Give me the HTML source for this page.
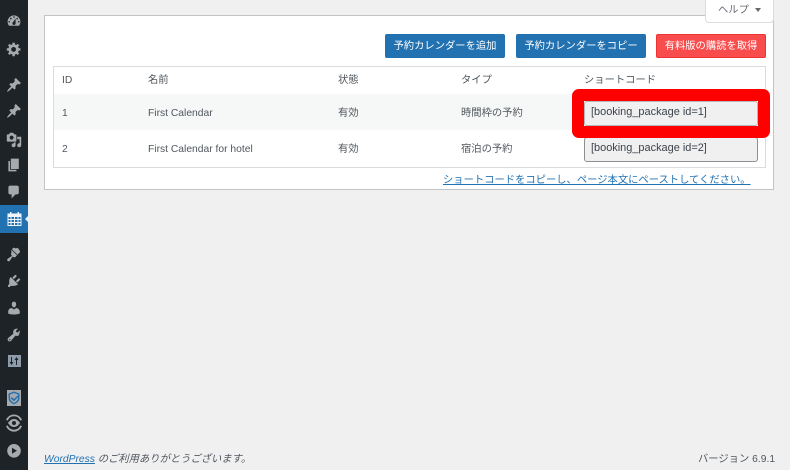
<!DOCTYPE html>
<html lang="ja"><head><meta charset="utf-8"><style>
html,body{margin:0;padding:0;width:790px;height:470px;overflow:hidden;background:#f0f0f1;font-family:"Liberation Sans","Noto Sans CJK JP",sans-serif;color:#50575e;font-size:10.3px}
div,a,span{position:absolute;white-space:nowrap;box-sizing:border-box}
#side{left:0;top:0;width:28px;height:470px;background:#1d2327}
#cur{left:0;top:205px;width:28px;height:28px;background:#2271b1}
#arrow{left:25px;top:215px;width:0;height:0;border:4px solid transparent;border-left:0;border-right:4px solid #f0f0f1}
svg.i{position:absolute;left:6px;width:16px;height:16px;fill:#a7aaad}
#panel{left:44px;top:15px;width:730px;height:175px;background:#fff;border:1px solid #c3c4c7}
#help{left:705px;top:-1px;width:69px;height:24px;background:#fff;border:1px solid #dcdcde;border-top:0;border-radius:0 0 4px 4px;color:#646970;font-size:10.3px;line-height:24px;padding-left:12px}
#help i{position:absolute;left:49px;top:9px;width:0;height:0;border:3px solid transparent;border-top:4px solid #646970;border-bottom:0}
.btn{top:34px;height:24px;border-radius:2px;background:#2271b1;color:#fff;text-align:center;line-height:25px;font-size:10.3px}
#table{left:53px;top:66px;width:713px;height:102px;border:1px solid #dcdcde;background:#fff}
.row{left:54px;width:711px;height:36px;background:#f6f7f7;top:94px}
.t{line-height:14px;color:#50575e;font-size:10.3px}
.inp{left:584px;width:174px;height:25px;background:#f0f0f1;border:1px solid #8c8f94;border-radius:3px;font-size:10.95px;line-height:20px;padding-left:6px;color:#3c434a}
#red{left:572px;top:89px;width:198px;height:49px;border:12px solid #f00;border-radius:7px}
a{color:#2271b1;text-decoration:underline}
</style></head><body>
<div id="side"></div><div id="cur"></div><div id="arrow"></div>
<svg class="i" style="top:13px" viewBox="0 0 20 20"><path fill-rule="evenodd" d="M3.760 16h12.480c1.100-1.370 1.760-3.110 1.760-5 0-4.420-3.580-8-8-8s-8 3.580-8 8c0 1.890.660 3.630 1.760 5zM10 4c.55 0 1 .45 1 1s-.45 1-1 1-1-.45-1-1 .45-1 1-1zM6 6c.55 0 1 .45 1 1s-.45 1-1 1-1-.45-1-1 .45-1 1-1zm8 0c.55 0 1 .45 1 1s-.45 1-1 1-1-.45-1-1 .45-1 1-1zm-5.370 5.550L12 7v6c0 1.100-.9 2-2 2s-2-.9-2-2c0-.57.24-1.080.63-1.450zM4 10c.55 0 1 .45 1 1s-.45 1-1 1-1-.45-1-1 .45-1 1-1zm12 0c.55 0 1 .45 1 1s-.45 1-1 1-1-.45-1-1 .45-1 1-1z"/></svg>
<svg class="i" style="top:41px" viewBox="0 0 20 20"><path fill-rule="evenodd" d="M18 12h-2.180c-.17.7-.44 1.350-.81 1.930l1.540 1.540-2.100 2.100-1.540-1.540c-.58.360-1.230.640-1.910.810V19H8v-2.180c-.68-.170-1.330-.450-1.910-.810l-1.540 1.540-2.120-2.120 1.540-1.540c-.36-.58-.64-1.220-.81-1.890H1V9h2.180c.17-.68.450-1.330.810-1.910L2.450 5.550l2.100-2.100 1.540 1.540c.58-.370 1.230-.640 1.910-.810V2h3v2.180c.68.170 1.330.440 1.910.810l1.540-1.540 2.120 2.120-1.540 1.540c.36.580.64 1.220.81 1.890H18v3zm-8.500 1.500c1.660 0 3-1.340 3-3s-1.340-3-3-3-3 1.340-3 3 1.340 3 3 3z"/></svg>
<svg class="i" style="top:77px" viewBox="0 0 20 20"><path d="M10.440 3.020l1.820-1.820 6.360 6.350-1.830 1.820c-1.050-.68-2.480-.57-3.410.36l-.75.75c-.92.93-1.040 2.350-.35 3.410l-1.830 1.820-2.410-2.410-2.800 2.790c-.42.42-3.380 2.710-3.800 2.290s1.860-3.390 2.280-3.810l2.790-2.790L4.100 9.360l1.830-1.820c1.050.69 2.480.57 3.410-.36l.75-.75c.93-.92 1.040-2.350.35-3.410z"/></svg>
<svg class="i" style="top:103px" viewBox="0 0 20 20"><path d="M10.440 3.020l1.820-1.820 6.360 6.350-1.830 1.820c-1.050-.68-2.480-.57-3.410.36l-.75.75c-.92.93-1.040 2.350-.35 3.410l-1.830 1.820-2.410-2.410-2.800 2.790c-.42.42-3.380 2.710-3.800 2.290s1.860-3.390 2.280-3.810l2.790-2.790L4.100 9.360l1.830-1.820c1.050.69 2.480.57 3.410-.36l.75-.75c.93-.92 1.040-2.350.35-3.410z"/></svg>
<svg class="i" style="top:132px" viewBox="0 0 20 20"><path fill-rule="evenodd" d="M13 11V4c0-.55-.45-1-1-1h-1.670L9 1H5L3.670 3H2c-.55 0-1 .45-1 1v7c0 .55.45 1 1 1h10c.55 0 1-.45 1-1zM7 4.500c1.380 0 2.500 1.120 2.500 2.500S8.380 9.500 7 9.500 4.500 8.380 4.500 7 5.620 4.500 7 4.500zM14 6h5v10.500c0 1.380-1.120 2.500-2.500 2.500S14 17.880 14 16.500s1.120-2.500 2.500-2.500c.17 0 .34.02.5.05V9h-3V6zm-4 8.050V13h2v3.500c0 1.380-1.120 2.500-2.500 2.500S7 17.880 7 16.500 8.120 14 9.500 14c.17 0 .34.02.5.05z"/></svg>
<svg class="i" style="top:157px" viewBox="0 0 20 20"><path d="M6 15V2h10v13H6zm-1 1h8v2H3V5h2v11z"/></svg>
<svg class="i" style="top:184px" viewBox="0 0 20 20"><path d="M5 2h9c1.100 0 2 .9 2 2v7c0 1.100-.9 2-2 2h-2l-5 5v-5H5c-1.100 0-2-.9-2-2V4c0-1.100.9-2 2-2z"/></svg>
<svg class="i" style="left:7px;width:15px;height:15px;top:212px;fill:#f0f6fc" viewBox="0 0 15 15"><path fill-rule="evenodd" d="M3 0h1.500v1.500h6V0H12v1.500h2.500V14H.5V1.500H3zM1.500 5v2h2V5zm3 0v2h2.500V5zm3.500 0v2h2.500V5zm3.500 0v2h2V5zM1.500 8v2h2V8zm3 0v2h2.500V8zM8 8v2h2.500V8zm3.500 0v2h2V8zM1.500 11v2h2v-2zm3 0v2h2.500v-2zM8 11v2h2.500v-2zm3.500 0v2h2v-2z"/></svg>
<svg class="i" style="top:246px" viewBox="0 0 20 20"><path d="M14.480 11.060L7.410 3.990l1.500-1.500c.5-.56 2.300-.47 3.540.77l1.060-1.060 2.120 1.060.5 1.500 1.500 1.500-.5 1.800-1.500 1.500-1.400 1.500zM6.700 4.700l7.070 7.070-2 2c-.8.800-2.200.6-3-.2l-.5-.5-3.500 5.300c-.7.900-2 1-2.800.2s-.7-2 .2-2.700l5.300-3.600-.5-.5c-.8-.8-1-2.200-.2-3z"/></svg>
<svg class="i" style="top:273px" viewBox="0 0 20 20"><path d="M13.110 4.360L9.870 7.600 8 5.730l3.240-3.240c.35-.34 1.050-.2 1.560.32.520.51.660 1.210.31 1.550zm-8 1.770l.91-1.120 9.010 9.010-1.190.84c-.71.710-2.630 1.160-3.820 1.160H6.140L4.900 17.260c-.59.59-1.540.59-2.120 0-.59-.58-.59-1.530 0-2.120l1.240-1.240v-3.880c0-1.130.4-3.050 1.090-3.890zm7.260 3.970l3.240-3.240c.34-.35 1.040-.21 1.550.31.520.51.660 1.210.31 1.550l-3.240 3.250z"/></svg>
<svg class="i" style="top:300px" viewBox="0 0 20 20"><path d="M10 9.250c-2.270 0-2.730-3.440-2.730-3.440C7 4.020 7.820 2 9.970 2c2.160 0 2.980 2.020 2.710 3.810 0 0-.41 3.440-2.680 3.440zm0 2.570L12.720 10c2.390 0 4.520 2.330 4.520 4.530v2.490s-3.650 1.130-7.240 1.130c-3.650 0-7.240-1.130-7.240-1.130v-2.490c0-2.250 1.940-4.500 4.440-4.500z"/></svg>
<svg class="i" style="top:327px" viewBox="0 0 20 20"><path fill-rule="evenodd" d="M16.680 9.770c-1.340 1.340-3.300 1.670-4.950.99l-5.410 6.520c-.99.99-2.590.99-3.580 0s-.99-2.590 0-3.570l6.520-5.420c-.68-1.650-.35-3.610.99-4.950 1.280-1.280 3.120-1.640 4.720-1.090l-2.870 2.870 2.120 2.120 2.870-2.870c.55 1.600.19 3.440-1.090 4.720zM4.160 16.380c.32.32.84.32 1.160 0s.32-.84 0-1.160-.84-.32-1.160 0-.32.84 0 1.160z"/></svg>
<svg class="i" style="top:353px" viewBox="0 0 16 16"><path fill="#8d9baa" d="M2 2h13v12H2z"/><path fill="#1d2327" d="M5 4h1v5h1.500L5.500 12 3.500 9H5zM10.500 4l2 3H11v5h-1V7H8.500z"/></svg>
<svg class="i" style="top:390px;left:6px" viewBox="0 0 16 16"><rect x="1" y="0" width="14" height="16" fill="#a7aaad"/><path d="M8 1.500l5.500 2v4.500c0 3-2.500 5-5.500 6.500C5 13 2.500 11 2.500 8V3.500z" fill="#2271b1"/><path d="M8 3l4 1.500v3.500c0 2.300-2 3.800-4 5-2-1.200-4-2.700-4-5V4.500z" fill="#a7aaad"/><path d="M5.500 7l2.500 2 3.500-3.500 1 1L8 11.300 4.800 8.500z" fill="#2271b1"/></svg>
<svg class="i" style="left:5px;width:18px;height:18px;top:414px" viewBox="0 0 18 18"><path d="M9 .5a8.500 8.500 0 0 1 8 5.500l-1.800.5A6.700 6.700 0 0 0 9 2.300 6.700 6.700 0 0 0 2.800 6.500L1 6a8.500 8.500 0 0 1 8-5.500zM1 12l1.800-.5A6.700 6.700 0 0 0 9 15.700a6.700 6.700 0 0 0 6.200-4.200L17 12a8.500 8.500 0 0 1-16 0zM9 5c3 0 5 2.500 6 4-1 1.500-3 4-6 4s-5-2.500-6-4c1-1.500 3-4 6-4zm0 2a2 2 0 1 0 0 4 2 2 0 0 0 0-4z" fill-rule="evenodd"/></svg>
<svg class="i" style="left:7px;width:14px;height:14px;top:444px" viewBox="0 0 14 14"><path d="M7 0a6.800 6.800 0 1 1 0 13.600A6.800 6.800 0 0 1 7 0zM5 3.800v6l5-3z" fill-rule="evenodd"/></svg>

<div id="panel"></div>
<div id="help">ヘルプ<i></i></div>
<div class="btn" style="left:385px;width:120px">予約カレンダーを追加</div>
<div class="btn" style="left:516px;width:130px">予約カレンダーをコピー</div>
<div class="btn" style="left:656px;width:110px;background:#f94c4c;border:1px solid #e33;line-height:23px">有料版の購読を取得</div>
<div id="table"></div>
<div class="row"></div>
<div class="t" style="left:62px;top:74px">ID</div>
<div class="t" style="left:148px;top:74px">名前</div>
<div class="t" style="left:338px;top:74px">状態</div>
<div class="t" style="left:461px;top:74px">タイプ</div>
<div class="t" style="left:584px;top:74px">ショートコード</div>
<div class="t" style="left:62px;top:107px">1</div>
<div class="t" style="left:148px;top:107px">First Calendar</div>
<div class="t" style="left:338px;top:107px">有効</div>
<div class="t" style="left:461px;top:107px">時間枠の予約</div>
<div class="t" style="left:62px;top:143px">2</div>
<div class="t" style="left:148px;top:143px">First Calendar for hotel</div>
<div class="t" style="left:338px;top:143px">有効</div>
<div class="t" style="left:461px;top:143px">宿泊の予約</div>
<div class="inp" style="top:101px;border-color:#b4b6b9">[booking_package id=1]</div>
<div class="inp" style="top:137px">[booking_package id=2]</div>
<div id="red"></div>
<a style="left:443px;top:174px;font-size:10.3px;line-height:14px;width:307px">ショートコードをコピーし、ページ本文にペーストしてください。</a>
<div class="t" style="left:44px;top:453px;font-style:italic"><a style="position:static">WordPress</a> のご利用ありがとうございます。</div>
<div class="t" style="left:698px;top:453px">バージョン 6.9.1</div>
</body></html>
